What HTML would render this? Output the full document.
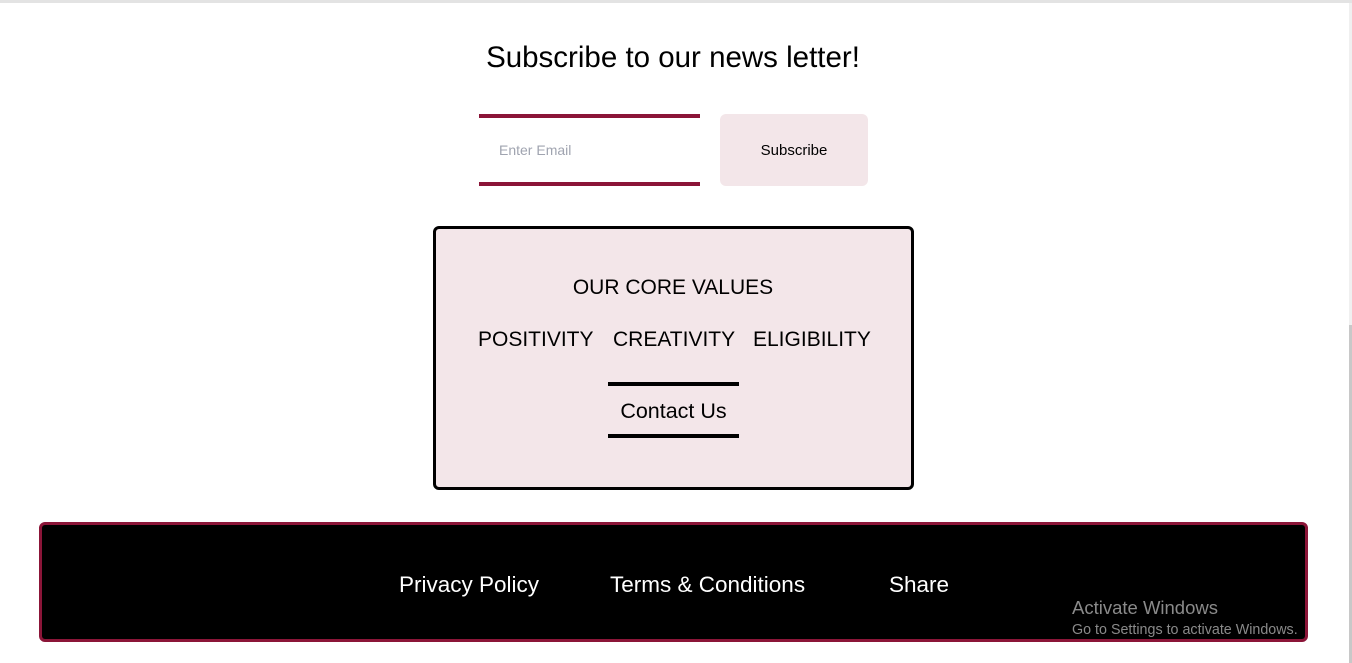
<!DOCTYPE html>
<html><head><meta charset="utf-8"><style>
*{margin:0;padding:0;box-sizing:border-box}
body{width:1352px;height:663px;background:#fff;position:relative;overflow:hidden;font-family:"Liberation Sans","DejaVu Sans",sans-serif;color:#000}
.a{position:absolute}
.t{white-space:nowrap}
</style></head><body>
<div class="a" style="left:0;top:0;width:1352px;height:3px;background:#e3e3e3"></div>
<div class="a" style="left:1349px;top:3px;width:3px;height:660px;background:#f0f0f0"></div>
<div class="a" style="left:1349px;top:325px;width:3px;height:338px;background:#c8c8c8"></div>
<div class="a t" style="left:0;width:1346px;top:41px;text-align:center;font-size:29.5px">Subscribe to our news letter!</div>
<div class="a" style="left:479px;top:114px;width:221px;height:72px;border-top:4px solid #8b1538;border-bottom:4px solid #8b1538"></div>
<div class="a t" style="left:499px;top:142px;font-size:14px;color:#a0a4b0">Enter Email</div>
<div class="a" style="left:720px;top:114px;width:148px;height:72px;background:#f3e6e9;border-radius:6px;text-align:center;line-height:74px;font-size:15px">Subscribe</div>
<div class="a" style="left:433px;top:226px;width:481px;height:264px;background:#f3e6e9;border:3px solid #000;border-radius:6px"></div>
<div class="a t" style="left:0;width:1346px;top:276px;text-align:center;font-size:21px">OUR CORE VALUES</div>
<div class="a t" style="left:478px;top:328px;font-size:21px">POSITIVITY</div>
<div class="a t" style="left:613px;top:328px;font-size:21px">CREATIVITY</div>
<div class="a t" style="left:753px;top:328px;font-size:21px">ELIGIBILITY</div>
<div class="a" style="left:608px;top:382px;width:131px;height:56px;border-top:4px solid #000;border-bottom:4px solid #000;text-align:center;line-height:50px;font-size:21.5px">Contact Us</div>
<div class="a" style="left:39px;top:522px;width:1269px;height:120px;background:#000;border:3px solid #8b1538;border-radius:6px"></div>
<div class="a t" style="left:399px;top:572px;font-size:22.5px;color:#fff">Privacy Policy</div>
<div class="a t" style="left:610px;top:572px;font-size:22.5px;color:#fff">Terms &amp; Conditions</div>
<div class="a t" style="left:889px;top:572px;font-size:22.5px;color:#fff">Share</div>
<div class="a t" style="left:1072px;top:597px;font-size:18.5px;color:#8a8a8a">Activate Windows</div>
<div class="a t" style="left:1072px;top:622px;font-size:14.3px;color:#8a8a8a">Go to Settings to activate Windows.</div>
</body></html>
